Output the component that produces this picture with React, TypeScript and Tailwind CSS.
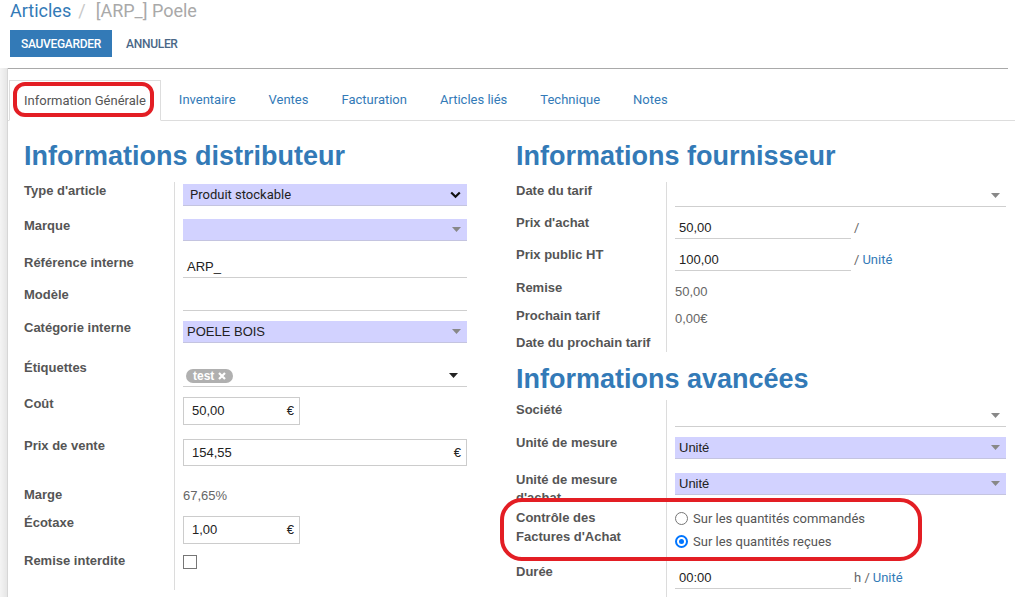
import React from 'react';

const font = { fontFamily: 'Roboto, "Liberation Sans", Arial, sans-serif' };
const arial = { fontFamily: '"Liberation Sans", Arial, sans-serif' };

// Small grey caret used by many2one fields
const Caret: React.FC<{ dark?: boolean }> = ({ dark }) => (
  <svg width="9" height="5" viewBox="0 0 9 5" className="shrink-0">
    <path d="M0 0h9L4.5 5z" fill={dark ? '#222' : '#888'} />
  </svg>
);

const Chevron = () => (
  <svg width="11" height="8" viewBox="0 0 11 8" className="shrink-0">
    <path d="M1.2 1.5l4.3 4.3 4.3-4.3" fill="none" stroke="#111" strokeWidth="2.2" />
  </svg>
);

const Row: React.FC<{
  label: React.ReactNode;
  h: string;
  lp: string;
  fp: string;
  children?: React.ReactNode;
  labelClass?: string;
}> = ({ label, h, lp, fp, children, labelClass = '' }) => (
  <div className={`flex ${h}`}>
    <div className={`w-[150px] shrink-0 text-[13px] leading-4 font-bold text-[#555555] ${lp} ${labelClass}`} style={arial}>
      {label}
    </div>
    <div className={`flex-1 border-l border-[#dcdcdc] pl-[8px] ${fp}`}>{children}</div>
  </div>
);

const Required: React.FC<{ text?: string; chevron?: boolean }> = ({ text, chevron }) => (
  <div className="flex items-center justify-between h-[22px] bg-[#d2d2ff] border-b border-[#c4c4e0] pl-[4px] pr-[6px] text-[13px] text-[#222]">
    {chevron ? <span className="pl-[3px]">{text}</span> : <span style={arial}>{text}</span>}
    {chevron ? <Chevron /> : <Caret />}
  </div>
);

const Line: React.FC<{ text?: string; caret?: boolean; dark?: boolean; className?: string }> = ({ text, caret, dark, className = '' }) => (
  <div className={`flex items-center justify-between h-[22px] border-b border-[#cfcfcf] pl-[4px] pr-[6px] text-[13px] text-[#222] ${className}`} style={arial}>
    <span>{text}</span>
    {caret && <Caret dark={dark} />}
  </div>
);

const Money: React.FC<{ value: string; className: string }> = ({ value, className }) => (
  <div className={`flex items-center justify-between border border-[#cccccc] pl-[8px] pr-[5px] text-[13px] text-[#222] ${className}`} style={arial}>
    <span>{value}</span>
    <span>€</span>
  </div>
);

const Radio: React.FC<{ checked?: boolean; label: string }> = ({ checked, label }) => (
  <div className="flex items-center gap-[5px] h-[23px] text-[13px] text-[#555]">
    {checked ? (
      <span className="w-[13px] h-[13px] rounded-full border-[2px] border-[#0075ff] bg-white flex items-center justify-center">
        <span className="w-[5px] h-[5px] rounded-full bg-[#0075ff]" />
      </span>
    ) : (
      <span className="w-[13px] h-[13px] rounded-full border border-[#767676] bg-white" />
    )}
    <span>{label}</span>
  </div>
);

const tabs = ['Inventaire', 'Ventes', 'Facturation', 'Articles liés', 'Technique', 'Notes'];

export default function App() {
  return (
    <div className="w-[1015px] h-[597px] overflow-hidden bg-white" style={font}>
      {/* control panel */}
      <div className="px-[10px] h-[68px]">
        <div className="flex items-baseline gap-[7px] text-[18px] leading-[22px]">
          <span className="text-[#337ab7]">Articles</span>
          <span className="text-[#c8c8c8]">/</span>
          <span className="text-[#a9a9a9] ml-[3px]">[ARP_] Poele</span>
        </div>
        <div className="flex items-center mt-[8px] gap-[14px]">
          <button className="h-[27px] px-[11px] bg-[#337ab7] text-white text-[12px] font-medium tracking-tight">SAUVEGARDER</button>
          <button className="text-[12px] font-medium text-[#4a6787] tracking-tight">ANNULER</button>
        </div>
      </div>

      <div className="flex h-[529px]">
        <div className="w-[8px] shrink-0 bg-gradient-to-r from-[#f4f4f4] to-[#e6e6e6] border-r border-[#d6d6d6]" />
        <div className="flex-1 relative">
          <div className="absolute top-0 left-0 w-[1000px] border-t border-[#a9a9a9]" />
          {/* tabs */}
          <div className="flex items-end pt-[12px] pl-[1px] border-b border-[#dddddd] h-[53px]">
            <div className="relative h-[41px] -mb-px flex items-center px-[14px] mr-[2px] border border-[#dddddd] border-b-white bg-white text-[13px] text-[#555]">
              Information Générale
              <div className="absolute left-[3px] top-[1px] right-[6px] bottom-[3px] border-[4px] border-[#e31e24] rounded-[12px]" />
            </div>
            {tabs.map((t) => (
              <div key={t} className="h-[41px] flex items-center px-[16px] mr-[1px] text-[13px] text-[#337ab7]">
                {t}
              </div>
            ))}
          </div>

          {/* sheet */}
          <div className="flex pl-[16px]">
            {/* left group */}
            <div className="w-[443px] shrink-0">
              <h2 className="h-[61px] pt-[20px] text-[27px] leading-[30px] font-bold text-[#337ab7]" style={arial}>
                Informations distributeur
              </h2>
              <Row label="Type d'article" h="h-[34px]" lp="pt-[1px]" fp="pt-[2px]">
                <Required text="Produit stockable" chevron />
              </Row>
              <Row label="Marque" h="h-[35px]" lp="pt-[2px]" fp="pt-[3px]">
                <Required />
              </Row>
              <Row label="Référence interne" h="h-[34px]" lp="pt-[4px]" fp="pt-[5px]">
                <Line text="ARP_" />
              </Row>
              <Row label="Modèle" h="h-[30px]" lp="pt-[2px]" fp="pt-[4px]">
                <Line />
              </Row>
              <Row label="Catégorie interne" h="h-[40px]" lp="pt-[5px]" fp="pt-[6px]">
                <Required text="POELE BOIS" />
              </Row>
              <Row label="Étiquettes" h="h-[37px]" lp="pt-[5px]" fp="pt-[10px]">
                <div className="flex items-center justify-between h-[22px] border-b border-[#cfcfcf] pl-[3px] pr-[9px]">
                  <span className="inline-flex items-center gap-[4px] h-[14px] px-[7px] rounded-full bg-[#b0b0b0] text-white text-[12px] font-bold leading-none" style={arial}>
                    test
                    <svg width="8" height="8" viewBox="0 0 8 8"><path d="M1 1l6 6M7 1L1 7" stroke="#fff" strokeWidth="2.2" /></svg>
                  </span>
                  <Caret dark />
                </div>
              </Row>
              <Row label="Coût" h="h-[40px]" lp="pt-[4px]" fp="pt-[5px]">
                <Money value="50,00" className="w-[117px] h-[28px]" />
              </Row>
              <Row label="Prix de vente" h="h-[48px]" lp="pt-[6px]" fp="pt-[7px]">
                <Money value="154,55" className="w-full h-[27px]" />
              </Row>
              <Row label="Marge" h="h-[30px]" lp="pt-[7px]" fp="pt-[3px]">
                <span className="text-[13px] leading-4 text-[#666]" style={arial}>67,65%</span>
              </Row>
              <Row label="Écotaxe" h="h-[39px]" lp="pt-[5px]" fp="pt-[6px]">
                <Money value="1,00" className="w-[117px] h-[28px]" />
              </Row>
              <Row label="Remise interdite" h="h-[41px]" lp="pt-[4px]" fp="pt-[6px]">
                <div className="w-[14px] h-[14px] border border-[#767676] bg-white" />
              </Row>
            </div>

            {/* right groups */}
            <div className="ml-[49px] w-[490px] shrink-0">
              <h2 className="h-[61px] pt-[20px] text-[27px] leading-[30px] font-bold text-[#337ab7]" style={arial}>
                Informations fournisseur
              </h2>
              <Row label="Date du tarif" h="h-[32px]" lp="pt-[1px]" fp="pt-[3px]">
                <Line caret />
              </Row>
              <Row label="Prix d'achat" h="h-[32px]" lp="pt-[1px]" fp="pt-[3px]">
                <div className="flex items-center">
                  <Line text="50,00" className="w-[176px]" />
                  <span className="ml-[3px] text-[13px] text-[#666]">/</span>
                </div>
              </Row>
              <Row label="Prix public HT" h="h-[32px]" lp="pt-[1px]" fp="pt-[3px]">
                <div className="flex items-center">
                  <Line text="100,00" className="w-[176px]" />
                  <span className="ml-[3px] text-[13px] text-[#666]">/</span>
                  <span className="ml-[3px] text-[13px] text-[#337ab7]">Unité</span>
                </div>
              </Row>
              <Row label="Remise" h="h-[26px]" lp="pt-[2px]" fp="pt-[1px]">
                <span className="text-[13px] leading-4 text-[#666]" style={arial}>50,00</span>
              </Row>
              <Row label="Prochain tarif" h="h-[28px]" lp="pt-[4px]" fp="pt-[2px]">
                <span className="text-[13px] leading-4 text-[#666]" style={arial}>0,00€</span>
              </Row>
              <Row label="Date du prochain tarif" h="h-[20px]" lp="pt-[3px]" fp="pt-0" />

              <h2 className="h-[48px] pt-[12px] text-[27px] leading-[30px] font-bold text-[#337ab7]" style={arial}>
                Informations avancées
              </h2>
              <Row label="Société" h="h-[32px]" lp="pt-[2px]" fp="pt-[5px]">
                <Line caret />
              </Row>
              <Row label="Unité de mesure" h="h-[34px]" lp="pt-[3px]" fp="pt-[5px]">
                <Required text="Unité" />
              </Row>
              <Row label={<>Unité de mesure<br />d'achat</>} h="h-[39px] overflow-hidden" lp="pt-[5px]" labelClass="leading-[18px]" fp="pt-[7px]">
                <Required text="Unité" />
              </Row>
              <div className="relative">
                <Row label={<>Contrôle des<br />Factures d'Achat</>} h="h-[55px]" lp="pt-[3px]" labelClass="leading-[19px]" fp="pt-[2px]">
                  <Radio label="Sur les quantités commandés" />
                  <Radio checked label="Sur les quantités reçues" />
                </Row>
                <div className="absolute left-[-16px] top-[-7px] w-[422px] h-[63px] border-[4px] border-[#e31e24] rounded-[22px]" />
              </div>
              <Row label="Durée" h="h-[40px]" lp="pt-[4px]" fp="pt-[7px]">
                <div className="flex items-center">
                  <Line text="00:00" className="w-[176px]" />
                  <span className="ml-[3px] text-[13px] text-[#666]">h /</span>
                  <span className="ml-[3px] text-[13px] text-[#337ab7]">Unité</span>
                </div>
              </Row>
            </div>
          </div>
        </div>
      </div>
    </div>
  );
}
